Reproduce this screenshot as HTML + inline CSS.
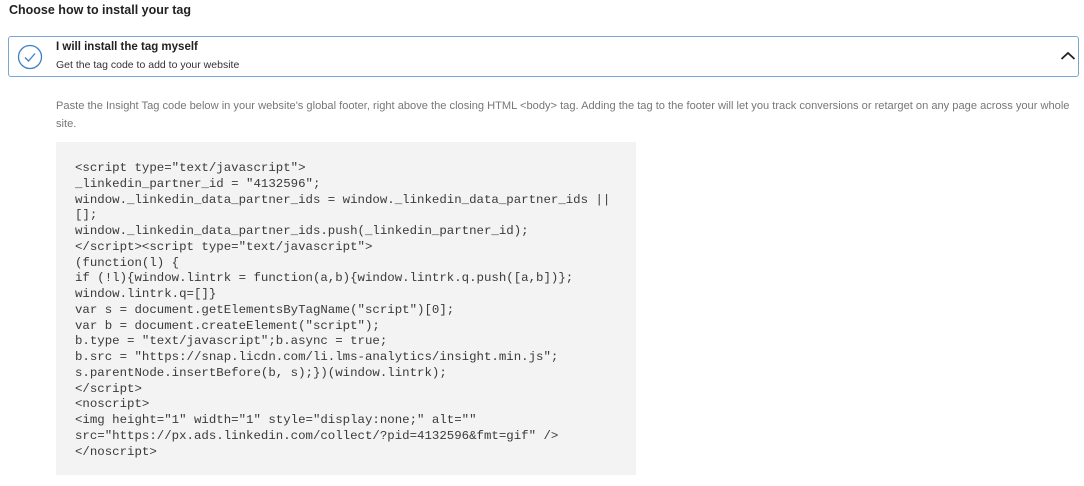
<!DOCTYPE html>
<html><head><style>
body{margin:0;width:1084px;height:486px;background:#fff;font-family:"Liberation Sans",sans-serif;position:relative;overflow:hidden}
.h{position:absolute;left:9px;top:3px;font-size:12.5px;font-weight:bold;color:#222}
.box{position:absolute;left:8px;top:36px;width:1069px;height:39px;border:1px solid #7aa6d6;border-radius:3px;box-sizing:content-box}
.t1{position:absolute;left:47px;top:4px;font-size:11.5px;font-weight:bold;color:#222}
.t2{position:absolute;left:47px;top:22px;font-size:10.5px;color:#333}
.p{position:absolute;left:56px;top:97px;width:1015px;font-size:11.1px;line-height:18px;color:#777}
.code{position:absolute;left:56px;top:142px;width:580px;height:333px;background:#f3f3f3}
pre{position:absolute;left:75px;top:161px;margin:0;font-family:"Liberation Mono",monospace;font-size:12.4px;line-height:15.75px;color:#3a3a3a}
</style></head><body>
<div class="h">Choose how to install your tag</div>
<div class="box">
<svg style="position:absolute;left:8px;top:7px" width="26" height="26" viewBox="0 0 26 26"><circle cx="13" cy="13" r="11.5" fill="none" stroke="#3f7fc4" stroke-width="1.3"/><path d="M8 13.5l3.5 3.5 6.5-7.5" fill="none" stroke="#3f7fc4" stroke-width="1.3"/></svg>
<div class="t1">I will install the tag myself</div>
<div class="t2">Get the tag code to add to your website</div>
<svg style="position:absolute;left:1051px;top:14px" width="16" height="10" viewBox="0 0 16 10"><path d="M1.5 8l6.5-6 6.5 6" fill="none" stroke="#222" stroke-width="1.8"/></svg>
</div>
<div class="p">Paste the Insight Tag code below in your website's global footer, right above the closing HTML &lt;body&gt; tag. Adding the tag to the footer will let you track conversions or retarget on any page across your whole site.</div>
<div class="code"></div>
<pre>&lt;script type="text/javascript"&gt;
_linkedin_partner_id = "4132596";
window._linkedin_data_partner_ids = window._linkedin_data_partner_ids ||
[];
window._linkedin_data_partner_ids.push(_linkedin_partner_id);
&lt;/script&gt;&lt;script type="text/javascript"&gt;
(function(l) {
if (!l){window.lintrk = function(a,b){window.lintrk.q.push([a,b])};
window.lintrk.q=[]}
var s = document.getElementsByTagName("script")[0];
var b = document.createElement("script");
b.type = "text/javascript";b.async = true;
b.src = "https://snap.licdn.com/li.lms-analytics/insight.min.js";
s.parentNode.insertBefore(b, s);})(window.lintrk);
&lt;/script&gt;
&lt;noscript&gt;
&lt;img height="1" width="1" style="display:none;" alt=""
src="https://px.ads.linkedin.com/collect/?pid=4132596&amp;fmt=gif" /&gt;
&lt;/noscript&gt;</pre>
</body></html>
